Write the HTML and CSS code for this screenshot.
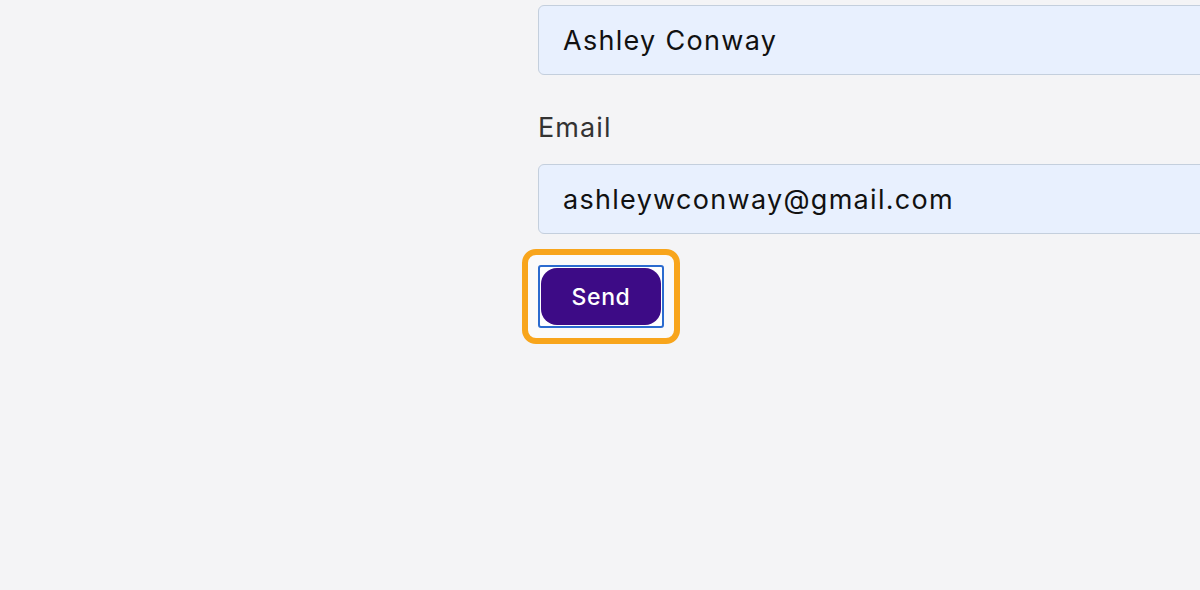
FILE: index.html
```html
<!DOCTYPE html>
<html lang="en">
<head>
<meta charset="utf-8">
<link rel="stylesheet" href="styles.css">
<title>Contact</title>
</head>
<body>
<form class="form">
  <input class="field" type="text" value="Ashley Conway">
  <label class="label">Email</label>
  <input class="field" type="email" value="ashleywconway@gmail.com">
  <div class="actions">
    <div class="focus-ring">
      <div class="btn-frame">
        <button type="button" class="btn">Send</button>
      </div>
    </div>
  </div>
</form>
</body>
</html>
```

FILE: styles.css
```css
html, body {
  margin: 0;
  padding: 0;
  background: #f4f4f6;
  overflow: hidden;
  height: 100%;
}
body {
  font-family: Inter, "Noto Sans", sans-serif;
}
.form {
  display: flex;
  flex-direction: column;
  align-items: flex-start;
  padding: 5px 0 0 538px;
}
.field {
  box-sizing: border-box;
  width: 720px;
  height: 70px;
  border: 1.5px solid #c4cfdd;
  border-radius: 6px;
  background: #e8f0fe;
  padding: 0 0 0 24px;
  font-family: Inter, "Noto Sans", sans-serif;
  font-size: 27px;
  letter-spacing: 1.3px;
  color: #111;
  outline: none;
}
.label {
  margin: 36px 0 20px 0;
  font-size: 27px;
  line-height: 33px;
  letter-spacing: 1.1px;
  color: #333;
}
.actions {
  margin: 15px 0 0 -16px;
}
.focus-ring {
  border: 6px solid #f8a51c;
  border-radius: 14px;
  padding: 10px;
  background: #fafafa;
}
.btn-frame {
  border: 2.5px solid #2b6bcf;
  border-radius: 3px;
  background: #fff;
  padding: 1px;
}
.btn {
  display: block;
  width: 120px;
  height: 57px;
  border: none;
  border-radius: 16px;
  background: #3d0b86;
  color: #fff;
  font-family: Inter, "Noto Sans", sans-serif;
  font-size: 23px;
  font-weight: 500;
  letter-spacing: 0.6px;
  padding: 0;
  cursor: pointer;
}
```
